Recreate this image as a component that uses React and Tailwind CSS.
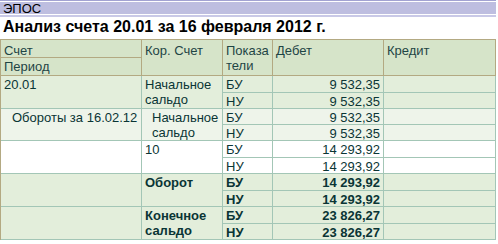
import React from "react";

const H = "border-r border-b border-[#b3a982] bg-[#d6e4c9] text-[#1f4545] pl-[3px]";
const B = "border-r border-b border-[#a3c6b6] pl-[3px] pt-[1px]";
const N = "border-r border-b border-[#a3c6b6] pr-[3px] pt-[1px] text-right";

function Group({ bg, acct, acctClass = "", kor, korClass = "", vals, bold }) {
  const w = bold ? "font-bold" : "";
  return (
    <>
      <div className={`${B} ${bg} row-span-2 ${acctClass}`}>{acct}</div>
      <div className={`${B} ${bg} row-span-2 ${w} ${korClass}`}>{kor}</div>
      <div className={`${B} ${bg} ${w}`}>БУ</div>
      <div className={`${N} ${bg} ${w}`}>{vals[0]}</div>
      <div className={`${B} ${bg}`}></div>
      <div className={`${B} ${bg} ${w}`}>НУ</div>
      <div className={`${N} ${bg} ${w}`}>{vals[1]}</div>
      <div className={`${B} ${bg}`}></div>
    </>
  );
}

export default function App() {
  return (
    <div className="w-[498px] h-[244px] bg-white overflow-hidden font-['Liberation_Sans',Arial,sans-serif] text-black">
      <div className="w-[496px]">
        <div className="h-[1px] bg-[#a3a3d2]"></div>
        <div className="h-[1px] bg-white"></div>
        <div className="h-[12px] bg-[#bebee0] pl-[3px] text-[13px] leading-[12px] pt-[1px] overflow-visible whitespace-nowrap">
          ЭПОС
        </div>
        <div className="h-[1px] bg-white"></div>
        <div className="h-[2px] bg-[#c9c9e7]"></div>
      </div>
      <div className="h-[22px] pl-[3px] text-[16px] leading-[19px] font-bold whitespace-nowrap">
        Анализ счета 20.01 за 16 февраля 2012 г.
      </div>
      <div className="w-[496px] grid grid-cols-[141px_81px_50px_111px_112px] grid-rows-[18px_18px_17px_16px_16px_16px_17px_16px_17px_16px_17px_16px] border-l border-t border-l-[#b3a982] border-t-[#b3a982] text-[13px] leading-[15px] text-[#0a3535]">
        <div className={`${H} pt-[3px]`}>Счет</div>
        <div className={`${H} row-span-2 pt-[3px]`}>Кор. Счет</div>
        <div className={`${H} row-span-2 pt-[3px] leading-[15px]`}>
          Показа
          <br />
          тели
        </div>
        <div className={`${H} row-span-2 pt-[3px]`}>Дебет</div>
        <div className={`${H} row-span-2 pt-[3px]`}>Кредит</div>
        <div className={`${H} pt-[1px]`}>Период</div>

        <Group
          bg="bg-[#e3eedb]"
          acct="20.01"
          kor={<>Начальное<br />сальдо</>}
          vals={["9 532,35", "9 532,35"]}
        />
        <Group
          bg="bg-[#eef4ea]"
          acct="Обороты за 16.02.12"
          acctClass="pl-[11px]"
          kor={<>Начальное<br />сальдо</>}
          korClass="pl-[10px]"
          vals={["9 532,35", "9 532,35"]}
        />
        <Group
          bg="bg-white"
          acct=""
          kor="10"
          vals={["14 293,92", "14 293,92"]}
        />
        <Group
          bg="bg-[#e3eedb]"
          acct=""
          kor="Оборот"
          vals={["14 293,92", "14 293,92"]}
          bold
        />
        <Group
          bg="bg-[#e3eedb]"
          acct=""
          kor={<>Конечное<br />сальдо</>}
          vals={["23 826,27", "23 826,27"]}
          bold
        />
      </div>
    </div>
  );
}
